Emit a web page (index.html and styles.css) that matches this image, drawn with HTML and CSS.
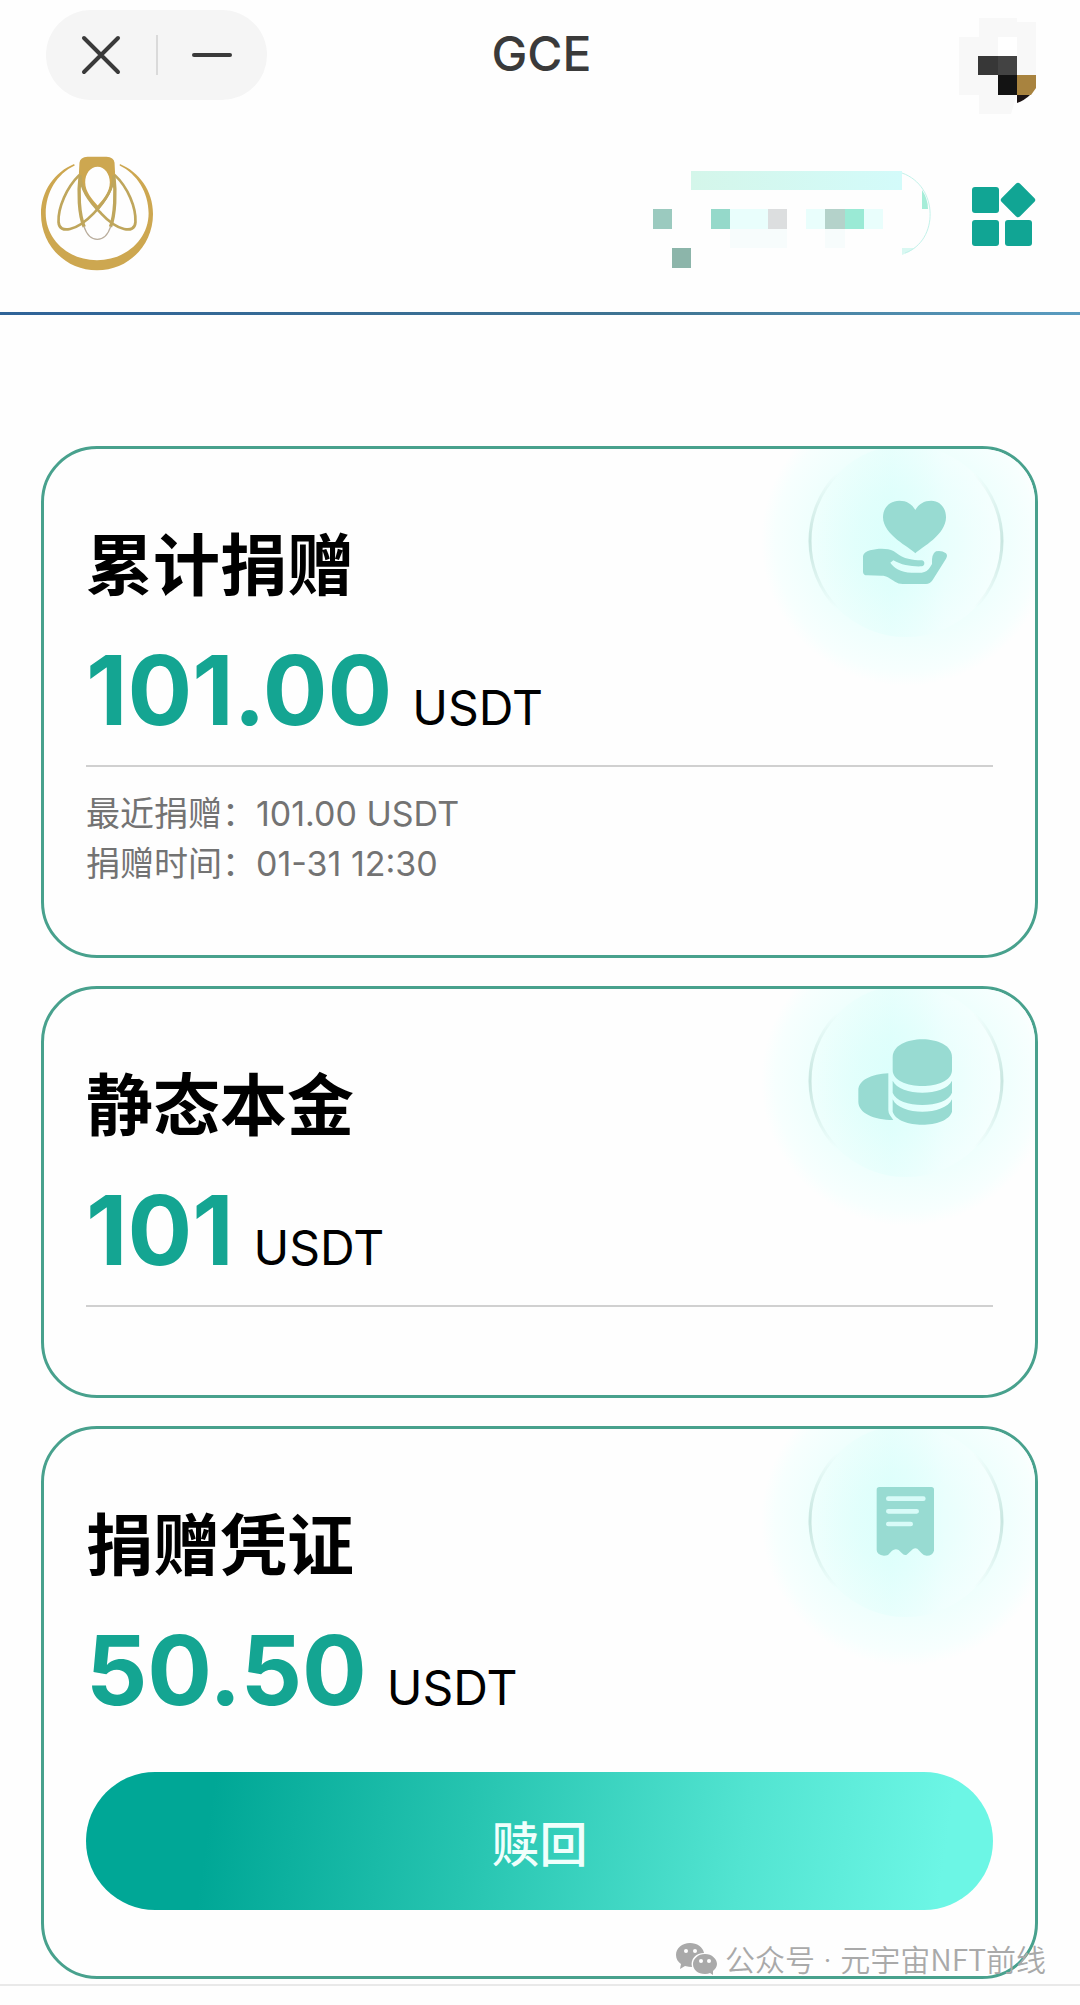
FILE: index.html
```html
<!DOCTYPE html>
<html lang="zh-CN">
<head>
<meta charset="utf-8">
<meta name="viewport" content="width=device-width, initial-scale=1">
<title>GCE</title>
<link rel="stylesheet" href="styles.css">
</head>
<body>
<div class="titlebar">
  <div class="capsule">
    <button class="capsule-btn" type="button" aria-label="关闭">
      <svg width="40" height="40" viewBox="0 0 40 40"><path d="M3 3L37 37M37 3L3 37"/></svg>
    </button>
    <span class="capsule-sep"></span>
    <button class="capsule-btn" type="button" aria-label="最小化">
      <svg width="40" height="40" viewBox="0 0 40 40"><path d="M2 20H38"/></svg>
    </button>
  </div>
  <h1 class="title">GCE</h1>
  <svg class="avatar" width="78" height="96" viewBox="0 0 78 96" aria-hidden="true">
    <path fill="#f8f8f8" d="M20 0H58V4H77V58H58V76H58L52 96H20V77H0V19H20Z"/>
    <path fill="#fff" d="M39 19H58V38H39Z"/>
    <path fill="#373737" d="M19 38H39V57H19Z"/>
    <path fill="#434343" d="M39 38H58V57H39Z"/>
    <path fill="#131313" d="M39 57H58V77H39Z"/>
    <path fill="#a8833f" d="M58 57H77V70L72 77H58Z"/>
    <path fill="#1c1414" d="M58 77H71Q66 82 58 85Z"/>
  </svg>
</div>

<header class="appbar">
  <a class="logo" href="#" aria-label="GCE">
    <svg width="112" height="116" viewBox="34 53 332 342" fill="none">
      <path fill="#cda750" d="M132 76C75 100 34 155 34 224C34 318 108 391 200 391C292 391 366 318 366 224C366 155 325 100 268 76L267 80C319 105 353 160 353 222C353 300 285 361 200 361C115 361 48 300 48 222C48 160 81 105 134 80Z"/>
      <path fill="#cda750" fill-rule="evenodd" d="M148 72Q150 55 172 54H228Q250 55 252 72L254 112L244 150Q236 175 203 214Q165 175 158 150L146 112ZM202 84C180 84 165 105 165 130C165 158 185 180 202 199C220 180 238 158 238 130C238 105 222 84 202 84Z"/>
      <g stroke="#bfa65c" stroke-width="8">
        <path d="M148 108C110 145 84 205 86 248C88 285 140 274 190 222C225 186 248 150 250 110"/>
        <path d="M252 108C292 145 316 205 314 248C312 285 260 274 212 222C175 186 152 150 150 110"/>
        <path stroke-width="10" d="M150 110C144 160 146 225 162 262"/>
        <path stroke-width="10" d="M250 110C256 160 254 225 240 262"/>
        <path stroke-width="4" stroke="#b9ad9c" d="M161 260C178 312 224 312 241 260"/>
      </g>
    </svg>
  </a>
  <div class="tools">
    <svg class="account" width="278" height="107" viewBox="0 -10 278 107" aria-hidden="true">
      <defs>
        <linearGradient id="bar"><stop offset="0" stop-color="#d4f6ea"/><stop offset="1" stop-color="#d3fbfa"/></linearGradient>
      </defs>
      <path fill="url(#bar)" d="M38 0H249V19H38Z"/>
      <path fill="#9bcabf" d="M0 38H19V58H0Z"/>
      <path fill="#95d9ca" d="M58 38H77V58H58Z"/>
      <path fill="#e9fefc" d="M77 38H115V58H77ZM153 38H172V58H153ZM211 38H230V58H211Z"/>
      <path fill="#dcdedf" d="M115 38H134V58H115Z"/>
      <path fill="#b4d2ca" d="M172 38H192V58H172Z"/>
      <path fill="#9aead5" d="M192 38H211V58H192Z"/>
      <path fill="#f7fcfc" d="M77 58H134V77H77ZM172 58H192V77H172Z"/>
      <path fill="#8cb5aa" d="M19 77H38V97H19Z"/>
      <path fill="#a5edd8" d="M269 19Q275 28 275 38H269Z"/>
      <path fill="#d9f8f2" d="M249 77H262Q256 82 249 84Z"/>
      <path fill="none" stroke="#c3f2ea" stroke-width="1" d="M249 2C286 15 286 70 252 82"/>
    </svg>
    <button class="menu-btn" type="button" aria-label="菜单">
      <svg width="64" height="64" viewBox="0 0 64 64" fill="#11a594">
        <rect x="0" y="5" width="27" height="26" rx="3"/>
        <rect x="0" y="38" width="27" height="26" rx="3"/>
        <rect x="33" y="38" width="27" height="26" rx="3"/>
        <rect x="33" y="5" width="26" height="26" rx="3" transform="rotate(45 46 18)"/>
      </svg>
    </button>
  </div>
</header>

<svg class="defs" width="0" height="0" aria-hidden="true">
  <defs>
    <radialGradient id="glow">
      <stop offset="0" stop-color="#dcfffc"/><stop offset=".35" stop-color="#e4fffc"/><stop offset=".65" stop-color="#effffd"/><stop offset=".9" stop-color="#f7fffe"/><stop offset="1" stop-color="#fefefe"/>
    </radialGradient>
    <linearGradient id="disc" x1="0" y1="0" x2="1" y2="0">
      <stop offset="0" stop-color="#d8fff8" stop-opacity="0"/><stop offset=".42" stop-color="#d6fffb" stop-opacity=".3"/><stop offset=".7" stop-color="#f4ffff" stop-opacity=".4"/><stop offset="1" stop-color="#fbffff" stop-opacity=".5"/>
    </linearGradient>
    <linearGradient id="ring" x1="0" y1="0" x2="0" y2="1">
      <stop offset=".15" stop-color="#c8e6e0" stop-opacity="0"/><stop offset=".5" stop-color="#c8e6e0"/><stop offset=".85" stop-color="#c8e6e0" stop-opacity="0"/>
    </linearGradient>
    <g id="halo">
      <circle cx="528" cy="333" r="435" fill="url(#glow)"/>
      <circle cx="528" cy="333" r="288" fill="url(#disc)" stroke="url(#ring)" stroke-width="9"/>
    </g>
  </defs>
</svg>

<main class="content">
  <section class="card">
    <svg class="badge" viewBox="93 -102 870 870" aria-hidden="true">
      <use href="#halo"/>
      <g fill="#98dbd2">
        <path d="M556 370C540 352 459 315 459 262C459 232 480 212 508 212C530 212 546 222 556 240C566 222 582 212 604 212C630 212 648 234 648 262C648 315 575 352 556 370Z"/>
        <path d="M399 378Q402 366 420 361C445 354 475 355 490 363C505 371 515 390 575 391Q583 392 583 400Q583 408 575 409C545 410 515 406 490 391L481 398C490 412 512 427 545 428H575Q592 427 600 412L606 402Q604 372 618 364Q634 360 648 370Q654 377 648 386L608 450Q600 462 588 462H518Q505 462 495 455C480 445 470 437 455 437L412 436Q399 436 399 425Z"/>
      </g>
    </svg>
    <h2 class="card-title">累计捐赠</h2>
    <p class="amount"><strong class="figure">101.00</strong><span class="unit">USDT</span></p>
    <div class="details">
      <p>最近捐赠：101.00 USDT</p>
      <p>捐赠时间：01-31 12:30</p>
    </div>
  </section>

  <section class="card">
    <svg class="badge" viewBox="93 -102 870 870" aria-hidden="true">
      <use href="#halo"/>
      <g fill="#98dbd2">
        <path d="M488 262C488 190 666 190 666 262V300C666 364 488 364 488 300Z"/>
        <path d="M488 332C510 380 644 380 666 332V368C650 417 504 417 488 368Z"/>
        <path d="M488 388C510 438 644 438 666 388V425C650 477 504 477 488 425Z"/>
        <path d="M475 310C425 312 385 330 385 362V395C385 428 430 450 490 450L480 436Q475 428 475 420Z"/>
      </g>
    </svg>
    <h2 class="card-title">静态本金</h2>
    <p class="amount"><strong class="figure">101</strong><span class="unit">USDT</span></p>
    <div class="details"></div>
  </section>

  <section class="card">
    <svg class="badge" viewBox="93 -102 870 870" aria-hidden="true">
      <use href="#halo"/>
      <path fill="#98dbd2" d="M448 231H604Q612 231 612 239V422Q608 437 590 437Q580 437 575 430L562 416Q555 412 548 418L530 434Q522 437 516 430L506 420Q496 414 486 422L474 435Q468 437 462 437Q440 434 440 420V239Q440 231 448 231Z"/>
      <path stroke="#d8fbf8" stroke-width="14" stroke-linecap="round" d="M475 266H580M475 304H560M475 342H542"/>
    </svg>
    <h2 class="card-title">捐赠凭证</h2>
    <p class="amount"><strong class="figure">50.50</strong><span class="unit">USDT</span></p>
    <button class="redeem" type="button">赎回</button>
  </section>

  <div class="watermark">
    <svg width="42" height="34" viewBox="0 0 42 34" aria-hidden="true">
      <path fill="#a9a9a9" d="M15 1C7 1 1 6 1 13C1 17 3 20 6 22L5 27L10 24Q14 25 17 25C15 17 21 11 29 11C28 5 22 1 15 1Z"/>
      <path fill="#a9a9a9" d="M30 12C23 12 18 17 18 22C18 28 23 32 30 32Q33 32 35 31L38 33L38 29C40 27 42 25 42 22C42 17 37 12 30 12Z"/>
      <g fill="#fff"><circle cx="11" cy="9" r="2"/><circle cx="20" cy="9" r="2"/><circle cx="26" cy="19" r="2"/><circle cx="34" cy="19" r="2"/></g>
    </svg>
    <span>公众号<span class="dot"> · </span>元宇宙NFT前线</span>
  </div>
</main>
<footer class="footer"></footer>
</body>
</html>
```
FILE: styles.css
```css
* {
  box-sizing: border-box;
}

body {
  margin: 0;
  background: #fefefe;
  color: #000;
  font-family: Inter, "Noto Sans CJK SC", sans-serif;
}

h1, h2, p {
  margin: 0;
}

button {
  border: 0;
  padding: 0;
  background: none;
  font-family: inherit;
}

svg {
  display: block;
}

.defs {
  position: absolute;
}

.titlebar {
  display: grid;
  grid-template-columns: 1fr auto 1fr;
  align-items: start;
  padding: 10px 43px 0 46px;
}

.capsule {
  display: flex;
  align-items: center;
  justify-content: space-evenly;
  width: 221px;
  height: 90px;
  border-radius: 45px;
  background: #f5f5f5;
}

.capsule-btn svg {
  fill: none;
  stroke: #3a3a3a;
  stroke-width: 4;
  stroke-linecap: round;
}

.capsule-sep {
  width: 2px;
  height: 40px;
  background: #dadada;
}

.title {
  color: #3a3a3a;
  font-size: 48px;
  font-weight: 500;
  line-height: 88px;
}

.avatar {
  justify-self: end;
  margin-top: 8px;
}

.appbar {
  display: flex;
  align-items: center;
  justify-content: space-between;
  padding: 42px 44px 40px 41px;
  border-bottom: 3px solid;
  border-image: linear-gradient(90deg, #2f6398, #3f7492 60%, #5a9cc0) 1;
}

.tools {
  display: flex;
  align-items: center;
  gap: 41px;
}

.content {
  position: relative;
  display: flex;
  flex-direction: column;
  gap: 28px;
  padding: 131px 42px 5px 41px;
}

.card {
  position: relative;
  overflow: hidden;
  padding: 77px 42px 66px;
  border: 3px solid #48a18d;
  border-radius: 56px;
}

.badge {
  position: absolute;
  top: -53px;
  right: -16px;
  width: 290px;
  height: 290px;
}

.card-title {
  position: relative;
  font-size: 67px;
  font-weight: 700;
  line-height: 80px;
}

.amount {
  display: flex;
  align-items: baseline;
  gap: 20px;
  margin-top: 34px;
}

.figure {
  color: #14a592;
  font-size: 96px;
  font-weight: 700;
  line-height: 100px;
}

.unit {
  font-size: 48px;
  line-height: 48px;
}

.details {
  margin-top: 25px;
  padding-top: 22px;
  border-top: 2px solid #d0d0d0;
  color: #737373;
  font-size: 34px;
  line-height: 50px;
}

.redeem {
  display: block;
  width: 100%;
  height: 138px;
  margin-top: 52px;
  border-radius: 69px;
  background: linear-gradient(98deg, #00a796 14%, #26c4b0 42%, #52e4d1 72%, #6cf6e5 94%);
  color: #f0fffc;
  font-size: 48px;
  font-weight: 500;
}

.watermark {
  position: absolute;
  right: 34px;
  bottom: 4px;
  display: flex;
  align-items: center;
  gap: 8px;
  color: #a9a9a9;
  font-family: "Noto Sans CJK SC", sans-serif;
  font-size: 30px;
  font-weight: 350;
  line-height: 40px;
}

.dot {
  font-family: Inter, sans-serif;
}

.footer {
  height: 20px;
  border-top: 2px solid #e9e9e9;
}
```
